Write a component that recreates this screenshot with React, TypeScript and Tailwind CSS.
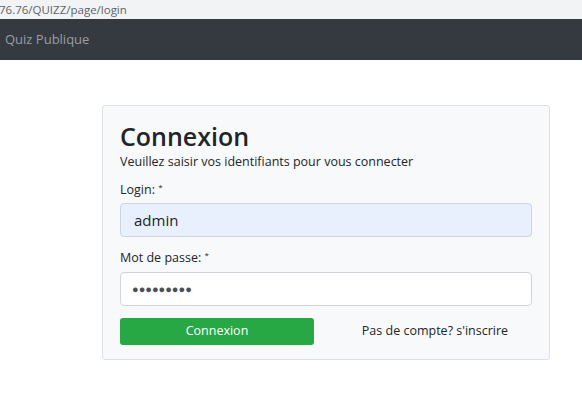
export default function App() {
  return (
    <div className="w-[582px] h-[420px] bg-white overflow-hidden" style={{ fontFamily: '"Open Sans", "Noto Sans", sans-serif' }}>
      <div className="h-[19px] bg-[#f1f3f4] flex items-center text-[11.5px] text-[#5f6368] leading-none">
        <span className="-ml-[1px]">76.76/QUIZZ/page/login</span>
      </div>
      <nav className="h-[41px] bg-[#343a40] flex items-center px-[5px]">
        <span className="text-[13px] text-[#9a9da0]">Quiz Publique</span>
      </nav>
      <div className="pt-[45px] pl-[102px]">
        <div className="w-[448px] h-[255px] bg-[#f8f9fa] border border-[#dee2e6] rounded-[3px] px-[17px] pt-[14px]">
          <h1 className="text-[25px] font-semibold text-[#212529] leading-[32px]">Connexion</h1>
          <p className="text-[12.5px] text-[#212529] mt-[2px] leading-[16px]">Veuillez saisir vos identifiants pour vous connecter</p>
          <label className="block text-[12.5px] text-[#212529] mt-[12px] leading-[16px]">
            Login: <sup className="text-[8px]">*</sup>
          </label>
          <div className="mt-[5px] h-[34px] w-[412px] bg-[#e8f0fe] border border-[#ced4da] rounded-[4px] flex items-center px-[13px] text-[15px] text-[#212529]">
            admin
          </div>
          <label className="block text-[12.5px] text-[#212529] mt-[13px] leading-[16px]">
            Mot de passe: <sup className="text-[8px]">*</sup>
          </label>
          <div className="mt-[6px] h-[34px] w-[412px] bg-white border border-[#ced4da] rounded-[4px] flex items-center px-[11px] text-[11px] text-[#495057]">
            ●●●●●●●●●
          </div>
          <div className="mt-[12px] flex items-center">
            <div className="w-[194px] h-[27px] bg-[#28a745] rounded-[3px] flex items-center justify-center text-white text-[12.5px]">
              Connexion
            </div>
            <div className="flex-1 ml-[24px] text-center text-[12.5px] text-[#212529]">Pas de compte? s'inscrire</div>
          </div>
        </div>
      </div>
    </div>
  )
}
